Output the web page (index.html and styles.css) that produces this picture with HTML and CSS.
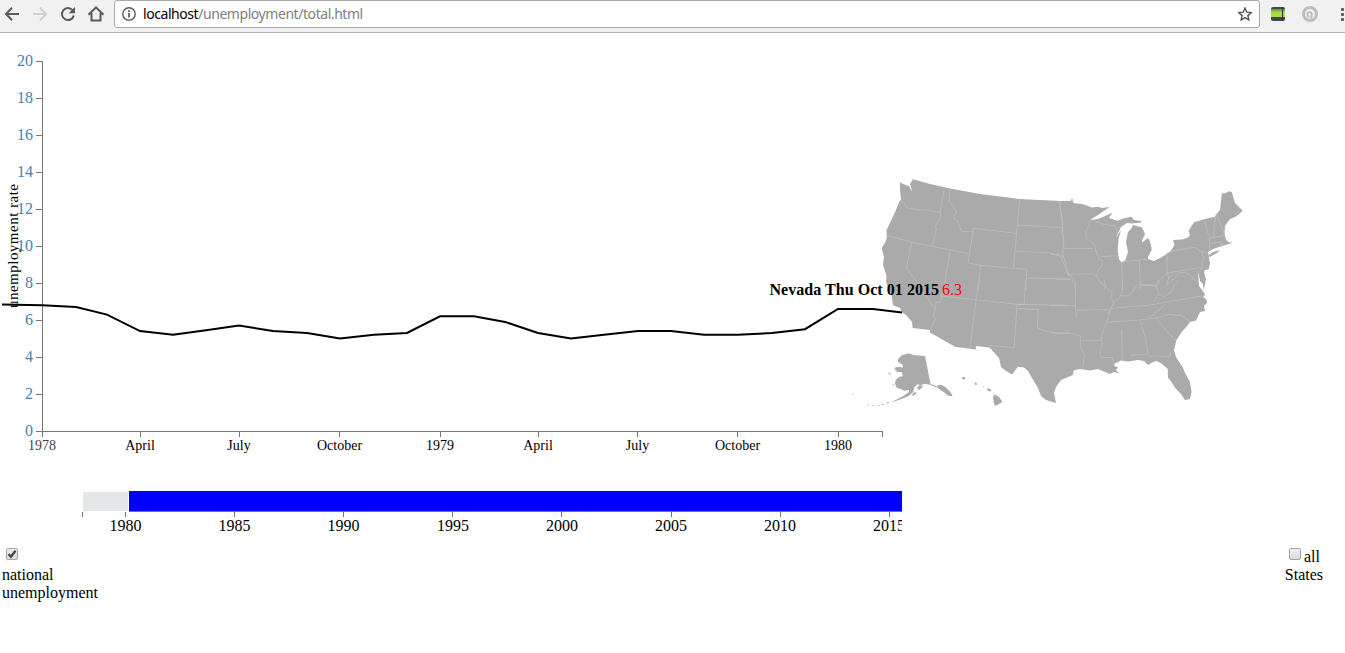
FILE: index.html
```html
<!DOCTYPE html>
<html lang="en">
<head>
<meta charset="utf-8">
<title>Unemployment</title>
<link rel="stylesheet" href="styles.css">
</head>
<body>
<header class="toolbar">
  <svg class="nav" width="114" height="32" viewBox="0 0 114 32" fill="none" stroke="#5a5a5a" stroke-width="2">
    <path d="M19 14H6.5M12 7.8L6 14l6 6.200"/>
    <path stroke="#d0d0d0" d="M33 14h12.500M40 7.800l6.200 6.200-6.200 6.200"/>
    <path d="M72.600 10.200A6 6 0 1 0 73.800 15.500"/><path fill="#5a5a5a" stroke="none" d="M75 7v6.300h-6.300z"/>
    <path d="M88.500 14.800L96 7.300l7.500 7.500M91.500 13v7.500h9V13" />
  </svg>
  <div class="address">
    <svg width="14" height="14" viewBox="0 0 14 14" fill="none" stroke="#5a5a5a"><circle cx="7" cy="7" r="6.200" stroke-width="1.400"/><path stroke-width="1.700" d="M7 6v4.500M7 3.200v1.700"/></svg>
    <span class="url"><b>localhost</b>/unemployment/total.html</span>
    <svg class="star" width="14" height="14" viewBox="0 0 14 14"><path fill="none" stroke="#555" stroke-width="1.400" d="M7 1l1.750 4.200 4.550.400-3.450 3 1.050 4.400L7 10.650 3.100 13l1.050-4.400L.700 5.600l4.550-.400z"/></svg>
  </div>
  <svg class="extensions" width="85" height="32" viewBox="1260 0 85 32">
    <defs><linearGradient id="lime" x2="0" y2="1"><stop stop-color="#69922c"/><stop offset=".45" stop-color="#a5e045"/><stop offset="1" stop-color="#a5dc4a"/></linearGradient></defs>
    <rect x="1271" y="7" width="14" height="14" rx="2" fill="#40464c"/>
    <rect x="1271" y="9" width="14" height="8" fill="url(#lime)"/>
    <path d="M1282.500 7v14" stroke="#30352e"/>
    <circle cx="1310" cy="14" r="6.500" fill="none" stroke="#bdbdbd" stroke-width="3"/>
    <path d="M1309.500 16.500a2.200 2.200 0 1 1 2.300-2.200q0 2.500-1 4.200" fill="none" stroke="#bdbdbd" stroke-width="1.800"/>
    <g fill="#5a5a5a"><rect x="1341" y="8" width="3" height="3" rx="1"/><rect x="1341" y="13" width="3" height="3" rx="1"/><rect x="1341" y="18" width="3" height="3" rx="1"/></g>
  </svg>
</header>

<main>
<svg class="chart" width="1345" height="507" viewBox="0 33 1345 507">
  <defs><clipPath id="plot"><rect x="2" y="33" width="900" height="507"/></clipPath></defs>

  <!-- US map: land, lakes and bays, then state borders -->
  <g class="land">
    <path d="M900 182L903 184L909 186L912 192L911 187L910 184L913 179.300L930 184L950 188.500L980 194L1020 199L1060 201L1071 201L1072 197.500L1073.500 203L1083 204.300L1088 206L1092 207.600L1098 206.800L1102 208L1110 206.700L1103 211.500L1098 215L1090 220L1098 219L1105 216L1112.500 212.500L1109 218L1118 220.700L1123 218.500L1131.500 216.700L1134 220L1141 221L1141.700 222.500L1131.700 223.500L1127 223L1121 227L1118 233L1116 238L1121 230L1118.500 239L1117.700 250L1119 259L1121 262L1125 261L1128 252L1126 242L1128 232L1131 229L1133 225L1142 227.500L1145 234L1141.700 241.500L1143 242L1147 238.500L1149 239L1151 245L1151.700 250L1148 257L1148 259L1154 261L1162 257L1170 251.700L1174.500 245L1173 240L1182 239.500L1188 237.500L1190 235L1188.500 231L1194 222.300L1204 219.300L1215 216.700L1217 213.300L1220 210L1222 193L1225 193.500L1229 191.300L1231.700 192L1235 203L1238 206L1242.700 210.700L1238 215L1235 217L1230 219L1227 223L1225 226L1224.500 234L1226 240L1230 243L1232 240.500L1231 243.500L1225 245L1219 247L1212 249.500L1208 252L1209 258L1210 264L1208.500 269.500L1205 270L1204 273L1206 279L1205.300 283L1203.600 290L1203 284L1200 281L1198 271L1199 286L1202 290L1205 294L1203 297L1206 299L1207.300 302.500L1204 306L1205 311L1200 312L1196 320.500L1190 322L1187 326L1181 333L1176.500 340L1174 350L1176 357L1183 368L1185 373L1190 382L1191.500 392L1190 399L1185 400L1181 394L1176 389L1170 380L1168 378L1167.700 369L1162 364L1157 361L1153 362L1148 365L1144 361L1138 360L1128 361.500L1121 360.500L1115 363.500L1114 366L1118 367L1116 370L1119 373.500L1114 372L1110 374L1104 371.500L1098 369L1090 370.500L1080 369L1073.500 370.500L1073 375L1061 380L1056 387L1054 393L1056 403L1046 400L1041 396L1038 388L1032 378L1028 371L1024 367.500L1018 366.700L1012 374.500L1006 371L1001 367L999 358L989.500 347.500L976 346L975.700 349.500L955 346.700L930 332.500L930 330L912.700 328L912 322L906 315L901.700 312L900 308L893 305L891.500 295L888 288L886 281L886.500 276L885 271L883 265L884 257L881.700 248L885 243L886.700 238L886.500 230L890 223L896 210L899 202L901 200L900 190Z"/>
    <path d="M1208 255.500L1213 252L1220 250L1217 253L1210 257Z"/>
    <g transform="translate(870 280) scale(.3333)">
      <path d="M84 238L95 226L117 220L130 225L165 228L182 313L190 314L205 322L214 315L226 321L241 336L248 346L243 349L229 340L216 331L205 324L196 321L182 315L165 311L151 316L142 313L132 323L130 336L115 349L94 357L76 364L63 367L82 358L101 347L117 336L117 330L102 332L94 328L80 323L75 311L77 300L87 291L98 289L96 277L82 276L74 268L76 262L92 261L98 264L98 254L84 245Z"/>
      <path d="M140 324l9-8 11 1-11 13zM125 344l10-9 5 5-10 7zM53 276l6 3 6 6-7-2zM65 313l8 1-2 4zM275 292l9-1 2 6-7 2zM313 307l7 1 1 6-5 1zM338 318l6 2-4 2zM350 325l7 1 7 3-1 5-9-1zM372 343l15 7 10 15-14 10-9 2-3-13-2-10zM-8 373l6 1-2 3zM4 375l10 0-5 3zM21 376l8-1-4 3zM34 373l10-2-7 5zM48 368l12-3-8 6zM-53 341l3 0 0 3-3 0zM203 316l10-2 14 9 12 14 7 9-10 2-18-14-14-10z"/>
    </g>
  </g>
  <g class="borders">
    <g transform="translate(870 170) scale(.3333)">
      <path d="M90 91L104 100L111 114L145 120L174 120L210 128L213 140L196 167L199 178L187 227M223 55L210 128M240 57L237 92L259 124L251 147L261 150L275 185L308 184L311 175L440 190M50 196L125 217L298 251L311 175M125 217L109 295L140 335M240 243L221 360M298 251L295 279L332 286L430 295L470 298L468 360M332 286L325 360M449 87L440 190L430 295M442 165L577 173M439 243L540 249L573 260L597 320M468 324L600 327M569 95L578 173L573 187L581 199L581 236"/>
    </g>
    <g transform="translate(1050 170) scale(.3333)">
      <path d="M28 95L36 145L38 175L40 236L130 235M38 236L38 250L42 266M0 253L28 253L42 263L55 310L77 338L77 360M18 328L65 328M52 313L132 312L143 323M119 151L118 170L108 181L108 203L134 226L142 258L158 275L154 292L144 300L140 315L153 340L165 350L163 360M130 151L160 163L194 167L203 190M152 260L203 257M215 275L218 360M225 275L268 270L293 268M268 270L271 347L318 345L330 328L352 309L350 250L362 244L435 232L455 245L472 250M352 309L455 292M271 347L270 360M318 345L323 360M353 309L356 325L370 312M356 325L350 347L375 322L390 308L405 307L420 316L430 326L447 335M463 148L473 188L480 198L478 238L484 245M482 203L524 197M482 220L514 216L522 229M491 199L493 165L498 132M500 132L522 190M513 217L514 233M453 245L462 264L456 279L459 289L452 300"/>
    </g>
    <g transform="translate(870 280) scale(.3333)">
      <path d="M140 5L195 88L191 110L197 118L188 130L182 150M221 15L212 67L198 66L195 88M214 48L442 73L600 76M326 0L299 207M466 0L463 73L441 73L433 203L355 196M442 85L505 89L502 143L520 151L548 158L570 162L600 160"/>
    </g>
    <g transform="translate(1050 280) scale(.3333)">
      <path d="M66 0L76 22L77 91L80 116M0 77L76 77M77 91L175 88L180 98L168 99M0 155L25 159L47 156L70 162L92 169L91 200L103 224L98 266M92 181L154 181L153 175M182 85L300 75L465 46M163 0L166 20L187 41L181 50L192 69L182 85L175 110L167 133L153 170L157 190L150 220L153 232L188 233L190 250M168 127L270 120L335 111L344 105L366 103L377 107L392 104L420 125M217 0L217 32L211 50L190 69M211 47L230 48L245 40L257 20L270 11L285 15L305 14L320 20L326 42L311 65M320 20L327 11L323 0M326 42L343 50L365 35L373 15L388 0M215 150L217 239M270 120L288 180L294 223L241 226M294 228L358 229L363 215M316 112L351 154L378 183M345 74L310 105L294 112"/>
    </g>
  </g>

  <path class="axis" d="M36 61.500H42.500V431.500H36M36 98.500h6M36 135.500h6M36 172.500h6M36 209.500h6M36 246.500h6M36 283.500h6M36 320.500h6M36 357.500h6M36 394.500h6"/>
  <path class="axis" d="M42.500 437V431.500H882.500V437M140.500 432v5M239.500 432v5M339.500 432v5M440.500 432v5M538.500 432v5M637.500 432v5M737.500 432v5M838.500 432v5"/>
  <g class="rates">
    <text x="33" y="66">20</text><text x="33" y="103">18</text><text x="33" y="140">16</text><text x="33" y="177">14</text><text x="33" y="214">12</text><text x="33" y="251">10</text><text x="33" y="288">8</text><text x="33" y="325">6</text><text x="33" y="362">4</text><text x="33" y="399">2</text><text x="33" y="436">0</text>
  </g>
  <text class="axis-title" transform="translate(18 308) rotate(-90)" textLength="124">unemployment rate</text>
  <g class="months">
    <text class="faded" x="42" y="450">1978</text><text x="140" y="450">April</text><text x="239" y="450">July</text><text x="339.500" y="450">October</text><text x="440" y="450">1979</text><text x="538" y="450">April</text><text x="637.500" y="450">July</text><text x="737.500" y="450">October</text><text x="838" y="450">1980</text>
  </g>
  <polyline class="series" clip-path="url(#plot)" points="2,304.500 42,305.200 76,307 107,314.600 140,331.100 173,334.800 206,330.200 239,325.500 273,331.100 307,333 340,338.500 374,334.800 407,333 440,316.300 474,316.300 505,321.900 538,333 571,338.500 604,334.800 638,331.100 671,331.100 704,334.800 738,334.800 772,333 805,329.200 838,308.900 873,308.900 902,312.400"/>
  <text class="reading" x="769.500" y="295" textLength="169.500">Nevada Thu Oct 01 2015</text>
  <text class="reading-value" x="942" y="295">6.3</text>

  <!-- time range brush -->
  <g clip-path="url(#plot)">
    <rect x="83" y="492" width="45" height="19" fill="#e4e6e8"/>
    <rect x="129" y="491" width="773" height="20" fill="#00f"/>
    <path class="axis" d="M129 511.500H902M82.500 512v5M125.500 512v5M234.500 512v5M343.500 512v5M452.500 512v5M561.500 512v5M671.500 512v5M780.500 512v5M889.500 512v5"/>
    <g class="years"><text x="125.500" y="531">1980</text><text x="234.500" y="531">1985</text><text x="343.500" y="531">1990</text><text x="453" y="531">1995</text><text x="562" y="531">2000</text><text x="671" y="531">2005</text><text x="780" y="531">2010</text><text x="889" y="531">2015</text></g>
  </g>
</svg>

<div class="controls">
  <label class="national"><span class="box"><svg width="10" height="10" viewBox="0 0 10 10"><path d="M1.500 5l2.500 2.700L8.500 1.800" fill="none" stroke="#444" stroke-width="2.300"/></svg></span><span>national<br>unemployment</span></label>
  <label class="states"><span class="box"></span> all<br>States</label>
</div>
</main>
</body>
</html>
```
FILE: styles.css
```css
body {
  margin: 0;
  background: #fff;
  color: #000;
  font: 16px/18px "Liberation Serif", serif;
  overflow: hidden;
}
.toolbar {
  box-sizing: border-box;
  height: 33px;
  display: flex;
  background: #f1f1f1;
  border-bottom: 1px solid #b3b3b3;
}
.nav, .extensions { flex: none; }
.address {
  box-sizing: border-box;
  flex: 1;
  height: 28px;
  padding: 0 7px;
  display: flex;
  align-items: center;
  gap: 7px;
  background: #fff;
  border: 1px solid #a9a9a9;
  border-radius: 3px;
}
.url {
  font: 14px/26px "Noto Sans", sans-serif;
  letter-spacing: -0.44px;
  color: #808080;
  white-space: nowrap;
}
.url b { font-weight: 400; color: #000; }
.star { margin-left: auto; }
.chart { display: block; }
.land { fill: #aaa; }
.borders path {
  fill: none;
  stroke: #c2c2c2;
  stroke-width: 2;
}
.axis {
  fill: none;
  stroke: #777;
  shape-rendering: crispEdges;
}
.rates { fill: #4682b4; text-anchor: end; }
.axis-title { font-size: 15px; }
.months { font-size: 14px; text-anchor: middle; }
.faded { fill: #444; }
.years { text-anchor: middle; }
.series { fill: none; stroke: #000; stroke-width: 2; }
.reading { font-weight: 700; }
.reading-value { fill: red; }
.controls {
  display: flex;
  justify-content: space-between;
  padding: 7px 22px 0 2px;
}
.national { display: flex; flex-direction: column; }
.national .box { margin: 1px 0 6px 4px; }
.states { text-align: center; padding-top: 1px; }
.states .box { margin: 0 -1px 0 1px; vertical-align: 2px; }
.box {
  box-sizing: border-box;
  display: inline-block;
  width: 12px;
  height: 12px;
  border: 1px solid #a5a5a5;
  border-radius: 2px;
  background: linear-gradient(#eee, #dcdcdc);
}
.box svg { display: block; }
```
